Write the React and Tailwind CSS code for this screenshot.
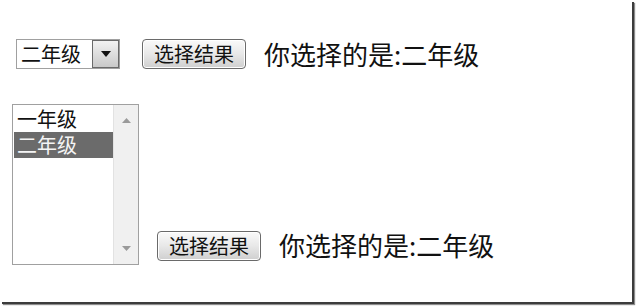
import React from "react";

const cjk = { fontFamily: '"Noto Sans CJK SC", "Liberation Sans", sans-serif' };

function Button() {
  return (
    <div className="w-[104px] h-[30px] rounded-[4px] border border-[#6a6a6a] bg-gradient-to-b from-[#fafafa] via-[#e8e8e8] to-[#cfcfcf] shadow-[inset_0_0_0_1px_#ffffff] flex items-center justify-center text-[20px] leading-none text-[#111]">
      选择结果
    </div>
  );
}

function App() {
  return (
    <div className="w-[636px] h-[307px] bg-white" style={cjk}>
      <div className="w-[632px] h-[302px] bg-white shadow-[2px_2px_0_#3c3c3c,3px_3px_1px_#8c8c8c] pt-[39px] pl-[12px]">
        <div className="flex items-center h-[30px]">
          <div className="ml-[4px] w-[104px] h-[30px] border border-[#a0a0a0] flex bg-white">
            <div className="flex-1 pl-[4px] flex items-center text-[20px] leading-none text-[#111]">
              二年级
            </div>
            <div className="w-[27px] h-full border border-[#6a6a6a] bg-gradient-to-b from-[#f2f2f2] to-[#c9c9c9] flex items-center justify-center">
              <svg width="10" height="6" viewBox="0 0 10 6">
                <path d="M0 0 L10 0 L5 6 Z" fill="#111" />
              </svg>
            </div>
          </div>
          <div className="ml-[22px]">
            <Button />
          </div>
          <div className="ml-[18px] text-[26px] leading-none text-[#111]">
            你选择的是:二年级
          </div>
        </div>

        <div className="flex items-end mt-[35px]">
          <div className="w-[127px] h-[161px] border border-[#a0a0a0] flex bg-white">
            <div className="w-[100px] pt-[1px] pl-[1px] text-[20px] leading-none">
              <div className="h-[26px] flex items-center pl-[3px] text-[#111]">一年级</div>
              <div className="h-[26px] flex items-center pl-[3px] bg-[#6b6b6b] text-[#f4f4f4]">二年级</div>
            </div>
            <div className="flex-1 bg-[#f0f0f0] border-l border-[#e2e2e2] flex flex-col items-center justify-between py-[13px]">
              <svg width="9" height="5" viewBox="0 0 9 5">
                <path d="M0 5 L9 5 L4.5 0 Z" fill="#9a9a9a" />
              </svg>
              <svg width="9" height="5" viewBox="0 0 9 5">
                <path d="M0 0 L9 0 L4.5 5 Z" fill="#9a9a9a" />
              </svg>
            </div>
          </div>
          <div className="ml-[18px] mb-[4px]">
            <Button />
          </div>
          <div className="ml-[18px] mb-[7px] text-[26px] leading-none text-[#111]">
            你选择的是:二年级
          </div>
        </div>
      </div>
    </div>
  );
}

export default App;
